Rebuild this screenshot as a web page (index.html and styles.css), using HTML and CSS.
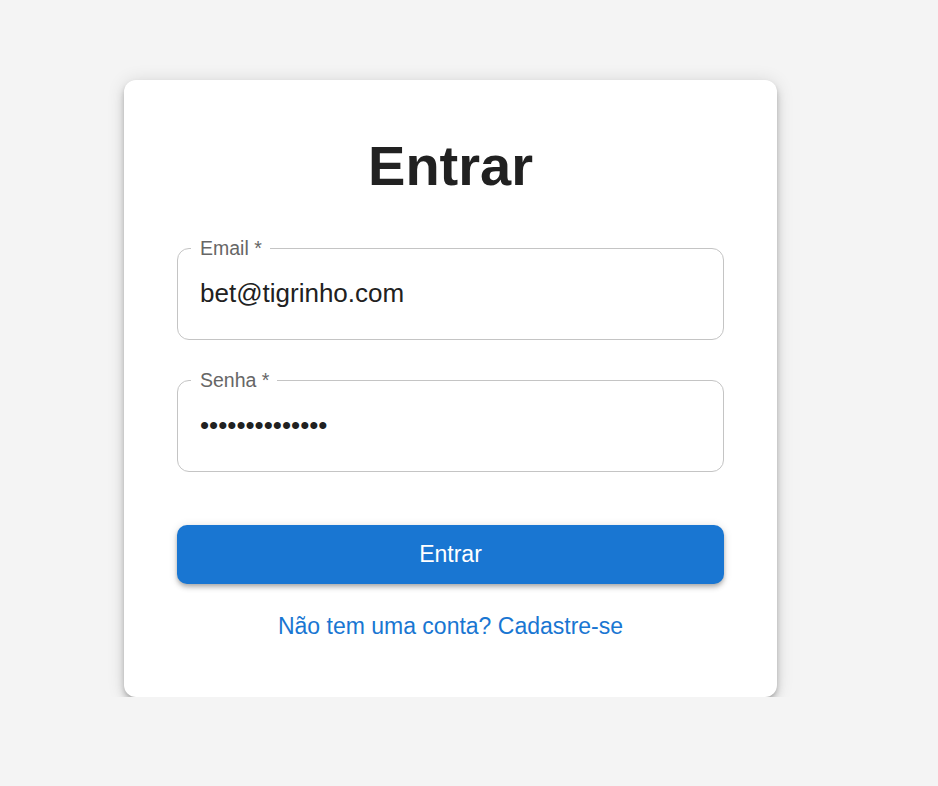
FILE: index.html
```html
<!DOCTYPE html>
<html lang="pt-BR">
<head>
<meta charset="utf-8">
<title>Entrar</title>
<link rel="stylesheet" href="styles.css">
</head>
<body>
<main class="card">
  <h1 class="title">Entrar</h1>
  <form class="form">
    <fieldset class="field">
      <legend class="field-label">Email *</legend>
      <input class="field-input" type="email" value="bet@tigrinho.com">
    </fieldset>
    <fieldset class="field field-password">
      <legend class="field-label">Senha *</legend>
      <input class="field-input" type="password" value="tigrinho123456">
    </fieldset>
    <button class="submit" type="button">Entrar</button>
    <a class="signup-link" href="#">Não tem uma conta? Cadastre-se</a>
  </form>
</main>
</body>
</html>
```

FILE: styles.css
```css
html, body {
  margin: 0;
  padding: 0;
  background: #f4f4f4;
  font-family: "Liberation Sans", Arial, sans-serif;
}

.card {
  box-sizing: border-box;
  width: 653px;
  margin: 80px 0 0 124px;
  padding: 54px 53px 57px;
  background: #fff;
  border-radius: 12px;
  box-shadow: 0 3px 5px -1px rgba(0,0,0,.2), 0 6px 10px 0 rgba(0,0,0,.14), 0 1px 18px 0 rgba(0,0,0,.12);
}

.title {
  margin: 0 0 40px;
  font-size: 56px;
  line-height: 64px;
  font-weight: 700;
  text-align: center;
  color: #212121;
}

.form {
  display: flex;
  flex-direction: column;
}

.field {
  margin: 0;
  padding: 0;
  border: 1px solid #c4c4c4;
  border-radius: 12px;
  min-width: 0;
}

.field-password {
  margin-top: 30px;
}

.field-label {
  margin-left: 13px;
  padding: 0 8px 0 9px;
  font-size: 19.5px;
  line-height: 20px;
  color: #666;
}

.field-input {
  display: block;
  box-sizing: border-box;
  width: 100%;
  margin: 0;
  border: 0;
  outline: none;
  background: transparent;
  padding: 20px 22px 31px;
  font-family: "Liberation Sans", Arial, sans-serif;
  font-size: 26px;
  line-height: 30px;
  height: 81px;
  color: #212121;
}

.submit {
  margin-top: 53px;
  height: 59px;
  border: 0;
  border-radius: 10px;
  background: #1976d2;
  color: #fff;
  font-family: "Liberation Sans", Arial, sans-serif;
  font-size: 23px;
  cursor: pointer;
  box-shadow: 0 2px 4px -1px rgba(0,0,0,.2), 0 4px 5px 0 rgba(0,0,0,.14), 0 1px 10px 0 rgba(0,0,0,.12);
}

.signup-link {
  margin-top: 29px;
  align-self: center;
  font-size: 23px;
  line-height: 27px;
  color: #1976d2;
  text-decoration: none;
}
```
